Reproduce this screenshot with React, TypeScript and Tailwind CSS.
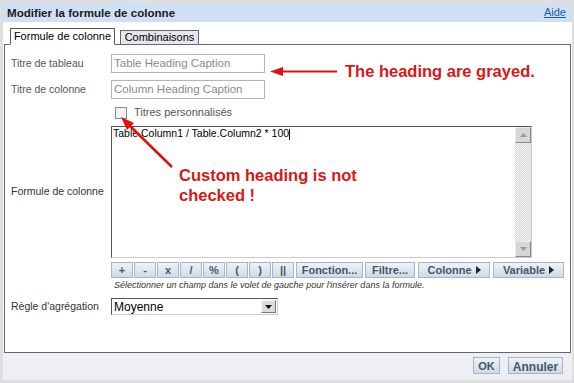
import React from 'react'

const ops = ['+', '-', 'x', '/', '%', '(', ')', '||']

function ToolButton({ label, className }: { label: React.ReactNode; className: string }) {
  return (
    <button
      className={`h-[16px] border border-[#a7b5c4] bg-gradient-to-b from-[#eef3f8] to-[#cfdae6] text-[11px] font-bold leading-none text-[#44566b] flex items-center justify-center ${className}`}
    >
      {label}
    </button>
  )
}

function Caret() {
  return (
    <svg width="5" height="8" viewBox="0 0 5 8" className="ml-[4px]">
      <path d="M0 0 L5 4 L0 8 Z" fill="#222" />
    </svg>
  )
}

export default function App() {
  return (
    <div className="relative w-[574px] h-[383px] overflow-hidden bg-white font-['Liberation_Sans',Arial,sans-serif] text-black">
      <div className="flex flex-col h-full border-[3px] border-[#dedede] border-r-[2px]">
        {/* title bar */}
        <div className="h-[19px] bg-[#cfe0f4] flex items-center justify-between pl-[4px] pr-[6px]">
          <span className="text-[11.6px] font-bold text-[#1b1b1b]">Modifier la formule de colonne</span>
          <span className="text-[11px] text-[#1c5a9c] underline">Aide</span>
        </div>

        {/* tabs */}
        <div className="flex items-end gap-[5px] pl-[7px] pt-[6px] mb-[-1px] relative z-10">
          <div className="h-[17px] w-[105px] text-center border border-[#555] border-b-white bg-white text-[11px] leading-[15px]">
            Formule de colonne
          </div>
          <div className="h-[15px] w-[79px] text-center border border-[#666] bg-[#e6e6ee] text-[11px] leading-[13px]">
            Combinaisons
          </div>
        </div>

        {/* panel */}
        <div className="mx-[1px] h-[309px] border border-[#666] bg-white pl-[6px] pt-[9px] text-[10.5px]">
          <div className="grid grid-cols-[100px_auto] items-center gap-y-[7px]">
            <span className="text-[#555]">Titre de tableau</span>
            <div className="w-[154px] h-[19px] border border-[#b4b4b4] px-[2px] text-[11.5px] leading-[17px] text-[#8a8a8a]">
              Table Heading Caption
            </div>
            <span className="text-[#555]">Titre de colonne</span>
            <div className="w-[154px] h-[19px] border border-[#b4b4b4] px-[2px] text-[11.5px] leading-[17px] text-[#8a8a8a]">
              Column Heading Caption
            </div>
          </div>

          <div className="flex items-center ml-[104px] mt-[7px] h-[13px]">
            <div className="w-[12px] h-[12px] border border-[#8a8a8a] bg-[#f4f4f4]" />
            <span className="ml-[7px] text-[#555] text-[11px]">Titres personnalisés</span>
          </div>

          <div className="grid grid-cols-[100px_auto] items-center mt-[7px]">
            <span className="text-[#333]">Formule de colonne</span>
            <div className="w-[421px] h-[132px] border border-[#555] border-r-[#ccc] border-b-[#ccc] flex">
              <div className="flex-1 px-[1px] text-[10.5px] leading-[12px]">
                Table.Column1 / Table.Column2 * 100<span className="inline-block w-[1px] h-[11px] bg-black align-middle" />
              </div>
              <div className="w-[16px] flex flex-col bg-[repeating-conic-gradient(#d8d8d8_0_25%,#f4f4f4_0_50%)] bg-[length:2px_2px]">
                <div className="h-[16px] bg-[#d6d6d6] border border-[#eee] border-r-[#888] border-b-[#888] flex items-center justify-center">
                  <svg width="7" height="4" viewBox="0 0 7 4"><path d="M0 4 L3.5 0 L7 4 Z" fill="#999" /></svg>
                </div>
                <div className="flex-1" />
                <div className="h-[16px] bg-[#d6d6d6] border border-[#eee] border-r-[#888] border-b-[#888] flex items-center justify-center">
                  <svg width="7" height="4" viewBox="0 0 7 4"><path d="M0 0 L3.5 4 L7 0 Z" fill="#999" /></svg>
                </div>
              </div>
            </div>
          </div>

          <div className="ml-[100px] mt-[4px] flex">
            {ops.map((o) => (
              <ToolButton key={o} label={o} className="w-[22px] mr-[1px]" />
            ))}
            <ToolButton label="Fonction..." className="w-[67px] ml-[1px]" />
            <ToolButton label="Filtre..." className="w-[50px] ml-[2px]" />
            <ToolButton label={<>Colonne<Caret /></>} className="w-[72px] ml-[3px]" />
            <ToolButton label={<>Variable<Caret /></>} className="w-[71px] ml-[3px]" />
          </div>
          <div className="ml-[103px] mt-[2px] text-[9px] italic text-[#333] leading-[11px]">
            Sélectionner un champ dans le volet de gauche pour l'insérer dans la formule.
          </div>

          <div className="grid grid-cols-[100px_auto] items-center mt-[7px]">
            <span className="text-[#333]">Règle d'agrégation</span>
            <div className="w-[167px] h-[17px] border border-[#555] border-r-[#ccc] border-b-[#ccc] flex items-center justify-between">
              <span className="pl-[2px] text-[12px]">Moyenne</span>
              <div className="w-[15px] h-[13px] mr-[1px] bg-[#dcdcdc] border border-[#f4f4f4] border-r-[#777] border-b-[#777] flex items-center justify-center">
                <svg width="7" height="4" viewBox="0 0 7 4"><path d="M0 0 L3.5 4 L7 0 Z" fill="#111" /></svg>
              </div>
            </div>
          </div>
        </div>

        {/* footer */}
        <div className="flex-1 bg-[#eeeef5] flex items-start justify-end gap-[8px] pt-[4px] pr-[9px]">
          <button className="h-[17px] w-[27px] border border-[#a7b5c4] bg-gradient-to-b from-[#eef3f8] to-[#cfdae6] text-[11px] font-bold text-[#44566b]">OK</button>
          <button className="h-[17px] w-[55px] border border-[#a7b5c4] bg-gradient-to-b from-[#eef3f8] to-[#cfdae6] text-[12px] font-bold text-[#44566b]">Annuler</button>
        </div>
      </div>

      {/* annotations */}
      <svg className="absolute left-0 top-0 pointer-events-none" width="574" height="383">
        <line x1="337" y1="71.5" x2="280" y2="71.5" stroke="#e01010" strokeWidth="2" />
        <path d="M270 71.5 L283 67 L283 76 Z" fill="#e01010" />
        <line x1="172" y1="167" x2="128" y2="124" stroke="#e01010" strokeWidth="2.5" />
        <path d="M121 117 L134 123 L127 130 Z" fill="#e01010" />
      </svg>
      <div className="absolute left-[345px] top-[62px] text-[16.5px] font-bold text-[#d81818] leading-[19px]">
        The heading are grayed.
      </div>
      <div className="absolute left-[179px] top-[165px] text-[16.5px] font-bold text-[#d81818] leading-[20px]">
        Custom heading is not
        <br />
        checked !
      </div>
    </div>
  )
}
